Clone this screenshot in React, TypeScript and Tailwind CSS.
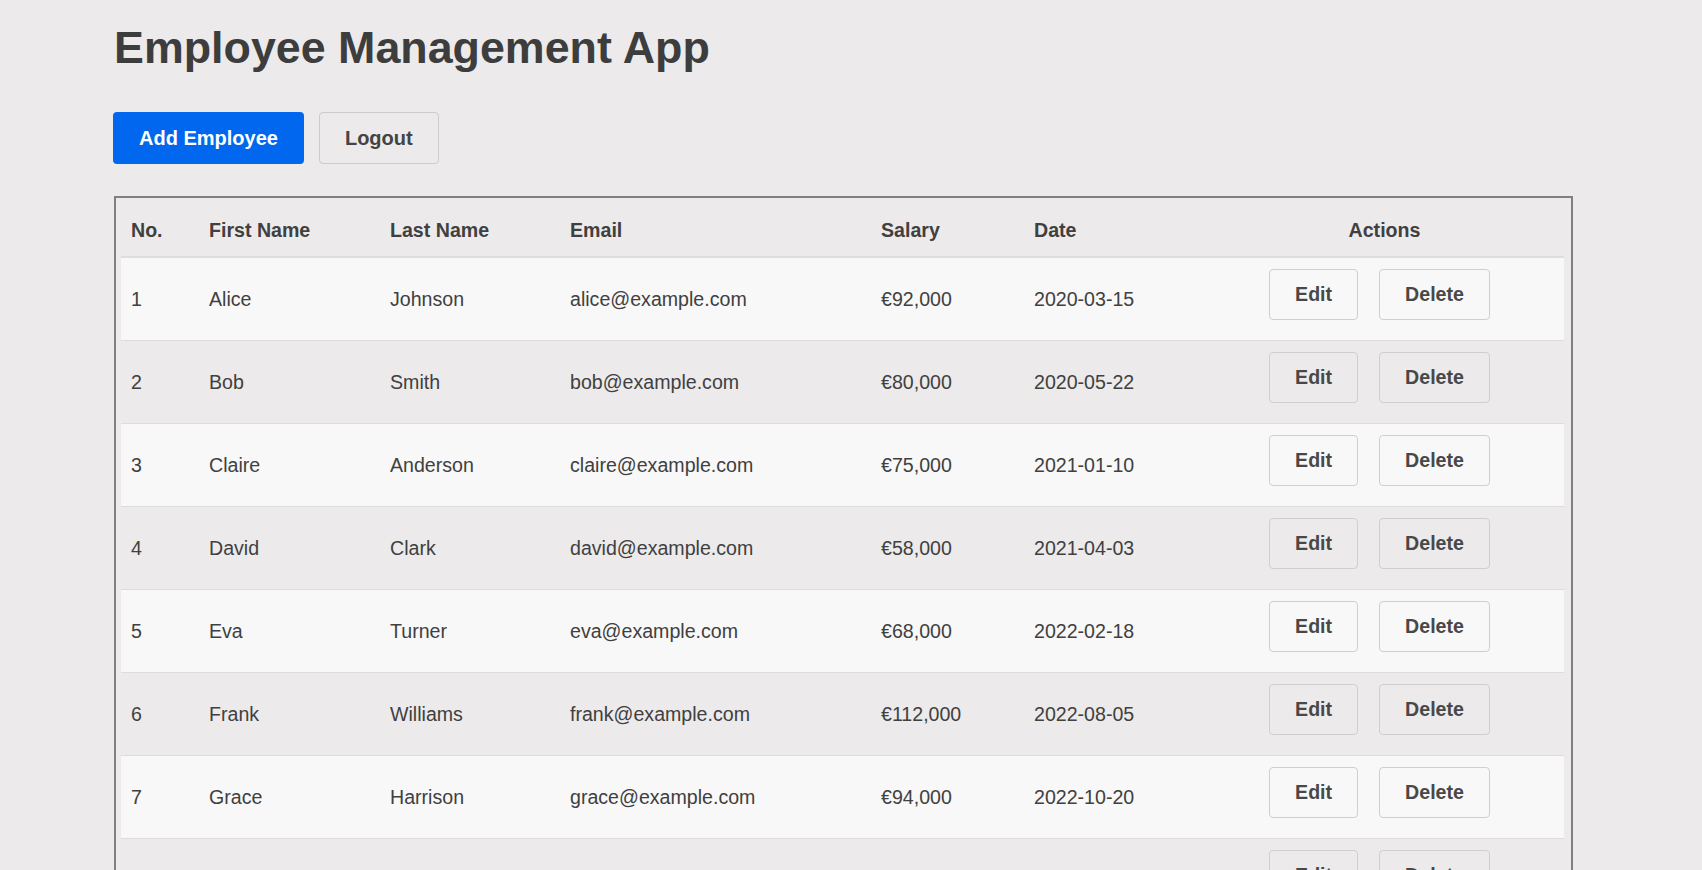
import React from "react";

type Employee = {
  id: number;
  firstName: string;
  lastName: string;
  email: string;
  salary: string;
  date: string;
};

const employees: Employee[] = [
  { id: 1, firstName: "Alice", lastName: "Johnson", email: "alice@example.com", salary: "€92,000", date: "2020-03-15" },
  { id: 2, firstName: "Bob", lastName: "Smith", email: "bob@example.com", salary: "€80,000", date: "2020-05-22" },
  { id: 3, firstName: "Claire", lastName: "Anderson", email: "claire@example.com", salary: "€75,000", date: "2021-01-10" },
  { id: 4, firstName: "David", lastName: "Clark", email: "david@example.com", salary: "€58,000", date: "2021-04-03" },
  { id: 5, firstName: "Eva", lastName: "Turner", email: "eva@example.com", salary: "€68,000", date: "2022-02-18" },
  { id: 6, firstName: "Frank", lastName: "Williams", email: "frank@example.com", salary: "€112,000", date: "2022-08-05" },
  { id: 7, firstName: "Grace", lastName: "Harrison", email: "grace@example.com", salary: "€94,000", date: "2022-10-20" },
  { id: 8, firstName: "Henry", lastName: "Moore", email: "henry@example.com", salary: "€87,000", date: "2023-01-12" },
];

const cols = "grid grid-cols-[78px_181px_180px_311px_153px_181px_359px]";

export default function App() {
  return (
    <div
      className="h-screen overflow-hidden bg-[#eceaeb] text-[#404040] px-[113px] pt-[21px]"
      style={{ fontFamily: '"Liberation Sans", Arial, sans-serif' }}
    >
      <h1 className="text-[44.8px] leading-[52px] font-bold text-[#3d3d3d] pl-px">
        Employee Management App
      </h1>

      <div className="mt-[39px] flex gap-[15px]">
        <button className="h-[52px] px-[26px] rounded-[4px] bg-[#0067ee] text-white text-[20px] font-bold">
          Add Employee
        </button>
        <button className="h-[52px] px-[25px] rounded-[4px] border border-[#cccccc] bg-[#eceaeb] text-[#444444] text-[20px] font-bold">
          Logout
        </button>
      </div>

      <div className="mt-[32px] ml-px w-[1459px] border-2 border-[#808080] pl-[5px] pr-[7px] pt-[5px] text-[19.6px]">
        <div className={`${cols} h-[55px] items-center font-bold border-b-2 border-[#dddddd]`}>
          <div className="px-[10px] pt-[2px]">No.</div>
          <div className="px-[10px] pt-[2px]">First Name</div>
          <div className="px-[10px] pt-[2px]">Last Name</div>
          <div className="px-[10px] pt-[2px]">Email</div>
          <div className="px-[10px] pt-[2px]">Salary</div>
          <div className="px-[10px] pt-[2px]">Date</div>
          <div className="px-[10px] pt-[2px] text-center">Actions</div>
        </div>

        {employees.map((e, i) => (
          <div
            key={e.id}
            className={`${cols} h-[83px] items-center border-b border-[#dddddd] ${
              i % 2 === 0 ? "bg-[#f8f8f8]" : ""
            }`}
          >
            <div className="px-[10px] pt-[2px]">{e.id}</div>
            <div className="px-[10px] pt-[2px]">{e.firstName}</div>
            <div className="px-[10px] pt-[2px]">{e.lastName}</div>
            <div className="px-[10px] pt-[2px]">{e.email}</div>
            <div className="px-[10px] pt-[2px]">{e.salary}</div>
            <div className="px-[10px] pt-[2px]">{e.date}</div>
            <div className="px-[10px] flex justify-center">
              <div className="flex gap-[21px] mr-[10px] mb-[10px]">
                <button className="h-[51px] px-[25px] pt-[2px] rounded-[4px] border border-[#cfcfcf] text-[#484848] font-bold">
                  Edit
                </button>
                <button className="h-[51px] px-[25px] pt-[2px] rounded-[4px] border border-[#cfcfcf] text-[#484848] font-bold">
                  Delete
                </button>
              </div>
            </div>
          </div>
        ))}
      </div>
    </div>
  );
}
